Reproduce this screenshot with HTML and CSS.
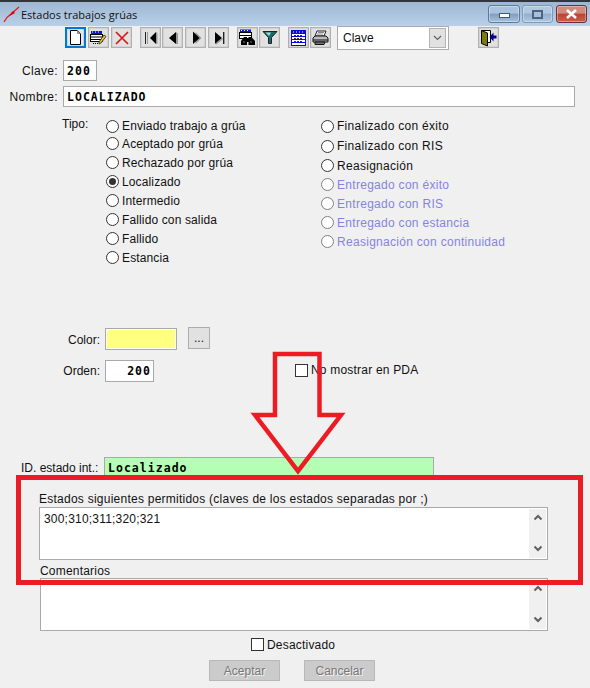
FILE: index.html
```html
<!DOCTYPE html>
<html lang="es">
<head>
<meta charset="utf-8">
<title>Estados trabajos grúas</title>
<link rel="stylesheet" href="styles.css">
</head>
<body>
<div class="window">
  <header class="titlebar">
    <svg class="app-icon" width="17" height="17" viewBox="0 0 17 17"><path d="M1 16 C3 12 5 10 8 8 L16 1" fill="none" stroke="#ee1111" stroke-width="1.200"/><path d="M5.500 10.500 L10 5 L12 7 Z" fill="#d80000"/></svg>
    <span class="title">Estados trabajos grúas</span>
    <div class="controls">
      <div class="ctl"><span class="ctl-min"></span></div>
      <div class="ctl ctl-mid"><span class="ctl-max"></span></div>
      <div class="ctl ctl-close"><svg width="13" height="10" viewBox="0 0 13 10"><path d="M2 1 L11 9 M11 1 L2 9" stroke="#fff" stroke-width="2.600"/></svg></div>
    </div>
  </header>

  <nav class="toolbar">
    <button class="tb tb-active"><svg width="15" height="17" viewBox="0 0 15 17"><path d="M2.500 1.500 H9.500 L12.500 4.500 V15.500 H2.500 Z" fill="#fff" stroke="#000"/><path d="M9.500 1.500 V4.500 H12.500" fill="#aaa" stroke="#888"/></svg></button>
    <button class="tb"><svg width="17" height="16" viewBox="0 0 17 16"><rect x="1" y="1" width="11" height="3" fill="#1010e0"/><path d="M2 2h1M5 2h1M8 2h1" stroke="#fff"/><rect x="0.500" y="4.500" width="12" height="7" fill="#fff" stroke="#000"/><path d="M1 7h11M1 9.500h11" stroke="#000"/><path d="M3 13.500h1M5 13.500h1M7 13.500h1" stroke="#000"/><path d="M9 12 L14 5 L16 6.500 L11 13 L9 14 Z" fill="#f0c040" stroke="#222" stroke-width=".8"/></svg></button>
    <button class="tb"><svg width="16" height="16" viewBox="0 0 16 16"><path d="M2 2 L14 14 M14 2 L2 14" stroke="#d81818" stroke-width="1.700"/></svg></button>
    <button class="tb tb-gap"><svg width="14" height="14" viewBox="0 0 14 14"><path d="M1.500 1 V13" stroke="#222"/><path d="M3 1h1v12h-1z" fill="#999"/><path d="M12 1 V13 L6 7 Z" fill="#000"/><path d="M12 1 L13.500 2 V13 H12 Z" fill="#999"/></svg></button>
    <button class="tb tb-tight"><svg width="14" height="14" viewBox="0 0 14 14"><path d="M10 1 V13 L3 7 Z" fill="#000"/><path d="M10 1 L12 2.500 V13 H10 Z" fill="#999"/></svg></button>
    <button class="tb"><svg width="14" height="14" viewBox="0 0 14 14"><path d="M5 1 L11 7 L5 13 Z" fill="#999" transform="translate(1.500 0)"/><path d="M4 0.500 V13 L10.500 7 Z" fill="#000"/></svg></button>
    <button class="tb"><svg width="14" height="14" viewBox="0 0 14 14"><path d="M3 1 L10 7 L3 13 Z" fill="#000"/><path d="M3 13 L10 7 L11 8 L4.500 13.500 Z" fill="#999"/><path d="M11.500 1 V13" stroke="#222"/><path d="M12.500 1 V13" stroke="#999"/></svg></button>
    <button class="tb tb-gap"><svg width="17" height="17" viewBox="0 0 17 17"><rect x="1" y="0.500" width="11" height="3" fill="#1010e0"/><path d="M2 1.500h1M5 1.500h1M8 1.500h1" stroke="#fff"/><rect x="0.500" y="3.500" width="12" height="6" fill="#fff" stroke="#000"/><path d="M1 6.500h11" stroke="#000"/><path d="M5 8 H8 V16 H2 V12 Z" fill="#000"/><path d="M9.500 8 H12.500 L16 12 V16 H9.500 Z" fill="#000"/><path d="M7 10 h4 v3 h-4 z" fill="#000"/><path d="M4 13h2M11 13h2" stroke="#777"/></svg></button>
    <button class="tb tb-tight"><svg width="16" height="15" viewBox="0 0 16 15"><path d="M1 1.500 H15 L9.500 7.500 V13.500 H6.500 V7.500 Z" fill="#1a6a6a" stroke="#222"/><path d="M3.500 2.500 H9 L7 6 Z" fill="#9fdcdc"/></svg></button>
    <button class="tb tb-gap"><svg width="15" height="16" viewBox="0 0 15 16"><rect x="0.500" y="0.500" width="14" height="15" fill="#fff" stroke="#0a0ae0"/><rect x="1" y="1" width="13" height="3" fill="#0a0ae0"/><path d="M2 2h1M5 2h1M8 2h1M11 2h1" stroke="#fff"/><path d="M1 6.500h13M1 9.500h13M1 12.500h13" stroke="#0a0ae0"/><path d="M3 5.500h9M3 8.500h9M3 11.500h9" stroke="#333" stroke-dasharray="2 1"/></svg></button>
    <button class="tb tb-tight"><svg width="17" height="15" viewBox="0 0 17 15"><path d="M5 1 H14 L12 6 H3 Z" fill="#fff" stroke="#222"/><path d="M6 2.500h6M5 4h6" stroke="#888"/><path d="M3 6 H14 L16 8 V12 H1 V8 Z" fill="#bbb" stroke="#111"/><path d="M1 10h15" stroke="#111"/><path d="M3 12 H13 L12 14.500 H3 Z" fill="#777" stroke="#111"/></svg></button>
    <div class="combo"><span class="combo-text">Clave</span><span class="combo-btn"><svg width="9" height="6" viewBox="0 0 9 6"><path d="M1 1 L4.500 4.500 L8 1" fill="none" stroke="#606060" stroke-width="1.200"/></svg></span></div>
    <button class="tb tb-exit"><svg width="17" height="18" viewBox="0 0 17 18"><path d="M2 2 H10 V13 H2 Z" fill="#fff"/><path d="M1.500 1.500 H10.500 V13.500 H7" fill="none" stroke="#000"/><path d="M1.500 1.500 L7.500 4 V17 L1.500 14.500 Z" fill="#7a7a10" stroke="#000"/><path d="M16.500 6.500 H13.500 V3.500 L9.500 8 L13.500 12.500 V9.500 H16.500 Z" fill="#00008c"/></svg></button>
  </nav>

  <main class="form">
    <div class="row row-clave">
      <label class="lbl lbl-main">Clave:</label>
      <div class="field mono f-clave">200</div>
    </div>
    <div class="row row-nombre">
      <label class="lbl lbl-main">Nombre:</label>
      <div class="field mono f-nombre">LOCALIZADO</div>
    </div>

    <section class="tipo">
      <span class="tipo-lbl">Tipo:</span>
      <div class="radios radios-left">
        <div class="radio"><i class="dot"></i>Enviado trabajo a grúa</div>
        <div class="radio"><i class="dot"></i>Aceptado por grúa</div>
        <div class="radio"><i class="dot"></i>Rechazado por grúa</div>
        <div class="radio"><i class="dot dot-on"></i>Localizado</div>
        <div class="radio"><i class="dot"></i>Intermedio</div>
        <div class="radio"><i class="dot"></i>Fallido con salida</div>
        <div class="radio"><i class="dot"></i>Fallido</div>
        <div class="radio"><i class="dot"></i>Estancia</div>
      </div>
      <div class="radios radios-right">
        <div class="radio"><i class="dot"></i>Finalizado con éxito</div>
        <div class="radio"><i class="dot"></i>Finalizado con RIS</div>
        <div class="radio"><i class="dot"></i>Reasignación</div>
        <div class="radio off"><i class="dot dot-off"></i>Entregado con éxito</div>
        <div class="radio off"><i class="dot dot-off"></i>Entregado con RIS</div>
        <div class="radio off"><i class="dot dot-off"></i>Entregado con estancia</div>
        <div class="radio off"><i class="dot dot-off"></i>Reasignación con continuidad</div>
      </div>
    </section>

    <div class="row row-color">
      <label class="lbl lbl-wide">Color:</label>
      <div class="swatch"></div>
      <button class="dots">...</button>
    </div>
    <div class="row row-orden">
      <label class="lbl lbl-wide">Orden:</label>
      <div class="field mono f-orden">200</div>
      <div class="check check-pda"><i class="box"></i>No mostrar en PDA</div>
    </div>

    <div class="row row-id">
      <label class="lbl-id">ID. estado int.:</label>
      <div class="field mono f-id">Localizado</div>
    </div>

    <div class="memo-block memo-a">
      <label>Estados siguientes permitidos (claves de los estados separadas por ;)</label>
      <div class="memo"><span class="memo-text">300;310;311;320;321</span><span class="sb"><svg width="10" height="7" viewBox="0 0 10 7"><path d="M1.500 5.500 L5 2 L8.500 5.500" fill="none" stroke="#606060" stroke-width="2"/></svg><svg width="10" height="7" viewBox="0 0 10 7"><path d="M1.500 1.500 L5 5 L8.500 1.500" fill="none" stroke="#606060" stroke-width="2"/></svg></span></div>
    </div>
    <div class="memo-block memo-b">
      <label>Comentarios</label>
      <div class="memo"><span class="memo-text"></span><span class="sb"><svg width="10" height="7" viewBox="0 0 10 7"><path d="M1.500 5.500 L5 2 L8.500 5.500" fill="none" stroke="#606060" stroke-width="2"/></svg><svg width="10" height="7" viewBox="0 0 10 7"><path d="M1.500 1.500 L5 5 L8.500 1.500" fill="none" stroke="#606060" stroke-width="2"/></svg></span></div>
    </div>

    <div class="check check-off"><i class="box"></i>Desactivado</div>
    <div class="actions">
      <button class="act">Aceptar</button>
      <button class="act">Cancelar</button>
    </div>
  </main>

  <svg class="annot" width="590" height="688" viewBox="0 0 590 688">
    <rect x="18.500" y="477.500" width="562" height="105" fill="none" stroke="#ed1c24" stroke-width="5"/>
    <path d="M275 354 H319.500 V415 H341 L298 471 L255 415 H275 Z" fill="none" stroke="#ed1c24" stroke-width="4.500" stroke-linejoin="miter"/>
  </svg>
</div>
</body>
</html>
```
FILE: styles.css
```css
* { box-sizing: border-box; }
html, body { margin: 0; padding: 0; }
body { width: 590px; height: 688px; overflow: hidden; background: #f0f0f0; font: 12px "Liberation Sans", Arial, sans-serif; letter-spacing: .2px; color: #111; }
.window { position: relative; width: 590px; height: 688px; background: #f0f0f0; overflow: hidden; }

.titlebar { height: 26px; display: flex; align-items: center; padding: 2px 3px 0 3px; border-top: 2px solid #30363c; background: linear-gradient(#9db7d3, #b9d0e8); }
.app-icon { flex: none; margin-top: -2px; }
.title { margin: 0 0 0 1px; font: 11px "Open Sans", sans-serif; letter-spacing: 0; color: #111; position: relative; top: -1px; }
.controls { margin-left: auto; display: flex; gap: 2px; position: relative; top: -1px; }
.ctl { width: 32px; height: 18px; border: 1px solid #5f7a99; border-radius: 3px; display: flex; align-items: center; justify-content: center; background: linear-gradient(#a9c3de 0 45%, #7f9dbd 50%, #a6c1dc); box-shadow: inset 0 0 0 1px rgba(255,255,255,.35); }
.ctl-mid { width: 31px; border-color: #7f9ab8; background: linear-gradient(#b0c8e0 0 45%, #93afcc 50%, #afc8e1); }
.ctl-close { width: 31px; margin-left: 1px; border-color: #6d3037; background: linear-gradient(#d08a80 0 45%, #bd4430 50%, #c9604a); }
.ctl-min { width: 11px; height: 5px; margin-top: 3px; background: #fff; border: 1px solid #3f5a78; }
.ctl-max { width: 11px; height: 9px; background: #a9c0d8; border: 2px solid #4d6480; }

.toolbar { height: 24px; display: flex; align-items: flex-start; padding: 1px 0 0 65px; }
.tb { width: 21px; height: 21px; padding: 0; margin: 0 0 0 2px; display: flex; align-items: center; justify-content: center; border: 1px solid #b0b0b0; outline: 0; background: #e1e1e1; box-shadow: inset 0 0 0 0.5px #c8c8c8; }
.tb-active { margin-left: 0; border: 2px solid #0078d7; background: #e8e8e8; }
.tb-gap { margin-left: 8px; }
.tb-tight { margin-left: 1px; }
.combo { width: 112px; height: 24px; margin: -1px 0 0 6px; display: flex; align-items: center; justify-content: space-between; background: #fff; border: 1px solid #acacac; padding: 0 2px 0 5px; letter-spacing: 0; }
.combo-text { color: #111; }
.combo-btn { width: 17px; height: 20px; display: flex; align-items: center; justify-content: center; background: #e1e1e1; border: 1px solid #b4b4b4; }
.tb-exit { margin-left: 29px; }

.form { padding: 0; }
.row { display: flex; align-items: center; }
.lbl { text-align: right; flex: none; margin-right: 5px; }
.lbl-main { width: 58px; letter-spacing: .35px; }
.lbl-wide { width: 100px; letter-spacing: 0; }
.field { background: #fff; border: 1px solid #a9a9a9; height: 21px; display: flex; align-items: center; padding: 0 3px; }
.mono { font: bold 11.5px "DejaVu Sans Mono", monospace; letter-spacing: 1.03px; color: #000; }
.row-clave { margin-top: 10px; }
.f-clave { width: 34px; }
.row-nombre { margin-top: 5px; }
.f-nombre { width: 512px; }

.tipo { display: flex; align-items: flex-start; margin-top: 9px; height: 208px; }
.tipo-lbl { margin: 1px 0 0 62px; width: 44px; flex: none; letter-spacing: 0; }
.radios-left { width: 215px; flex: none; letter-spacing: .13px; }
.radios-right { letter-spacing: .29px; }
.radio { display: flex; align-items: center; height: 19px; }
.radios-left .radio:first-child { height: 18px; padding-top: 2px; }
.radios-right .radio:nth-child(-n+2) { height: 20px; }
.dot { flex: none; width: 13px; height: 13px; margin-right: 3px; border: 1px solid #333; border-radius: 50%; background: #fff; display: flex; align-items: center; justify-content: center; }
.dot-on::after { content: ""; width: 7px; height: 7px; border-radius: 50%; background: #333; }
.dot-off { border-color: #808080; }
.off { color: #8484e0; }

.row-color { margin-top: 3px; align-items: flex-start; }
.row-color .lbl { margin-top: 6px; }
.swatch { width: 72px; height: 22px; margin-top: 1px; background: #ffff80; border: 1px solid #a9a9a9; box-shadow: inset 0 0 0 1px #fff; }
.dots { width: 22px; height: 22px; margin-left: 11px; padding: 0; background: #e1e1e1; border: 1px solid #adadad; font: 12px "Liberation Sans", sans-serif; color: #111; }
.row-orden { margin-top: 10px; }
.f-orden { width: 49px; height: 22px; justify-content: flex-end; padding-right: 2px; }
.check { display: flex; align-items: center; }
.box { flex: none; width: 13px; height: 13px; margin-right: 3px; background: #fff; border: 1px solid #333; }
.check-pda { margin-left: 141px; position: relative; top: -1px; }

.row-id { margin-top: 75px; align-items: flex-start; }
.lbl-id { margin: 4px 0 0 21px; width: 83px; flex: none; letter-spacing: 0; }
.f-id { width: 330px; height: 23px; background: #b3ffb3; padding: 0 0 2px 3px; }

.memo-block label { display: block; height: 15px; line-height: 14px; letter-spacing: .245px; }
.memo { display: flex; height: 53px; width: 509px; background: #fff; border: 1px solid #a9a9a9; }
.memo-text { flex: 1; padding: 4px 0 0 4px; }
.sb { width: 17px; flex: none; background: #f0f0f0; margin: 1px 1px 1px 0; display: flex; flex-direction: column; justify-content: space-between; align-items: center; padding: 5px 0 6px; }
.memo-a { margin: 12px 0 0 39px; }
.memo-b { margin: 4px 0 0 40px; }
.memo-b label { height: 14px; letter-spacing: .2px; }
.memo-b .memo { width: 508px; height: 53px; }

.check-off { justify-content: flex-start; margin: 7px 0 0 251px; height: 13px; }
.actions { display: flex; margin: 9px 0 0 209px; gap: 24px; }
.act { width: 71px; height: 21px; padding: 0; background: #cbcbcb; border: 1px solid #b8b8b8; color: #777; font: 12px "Liberation Sans", sans-serif; text-shadow: 1px 1px 0 #f4f4f4; }

.annot { position: absolute; left: 0; top: 0; pointer-events: none; }
```
